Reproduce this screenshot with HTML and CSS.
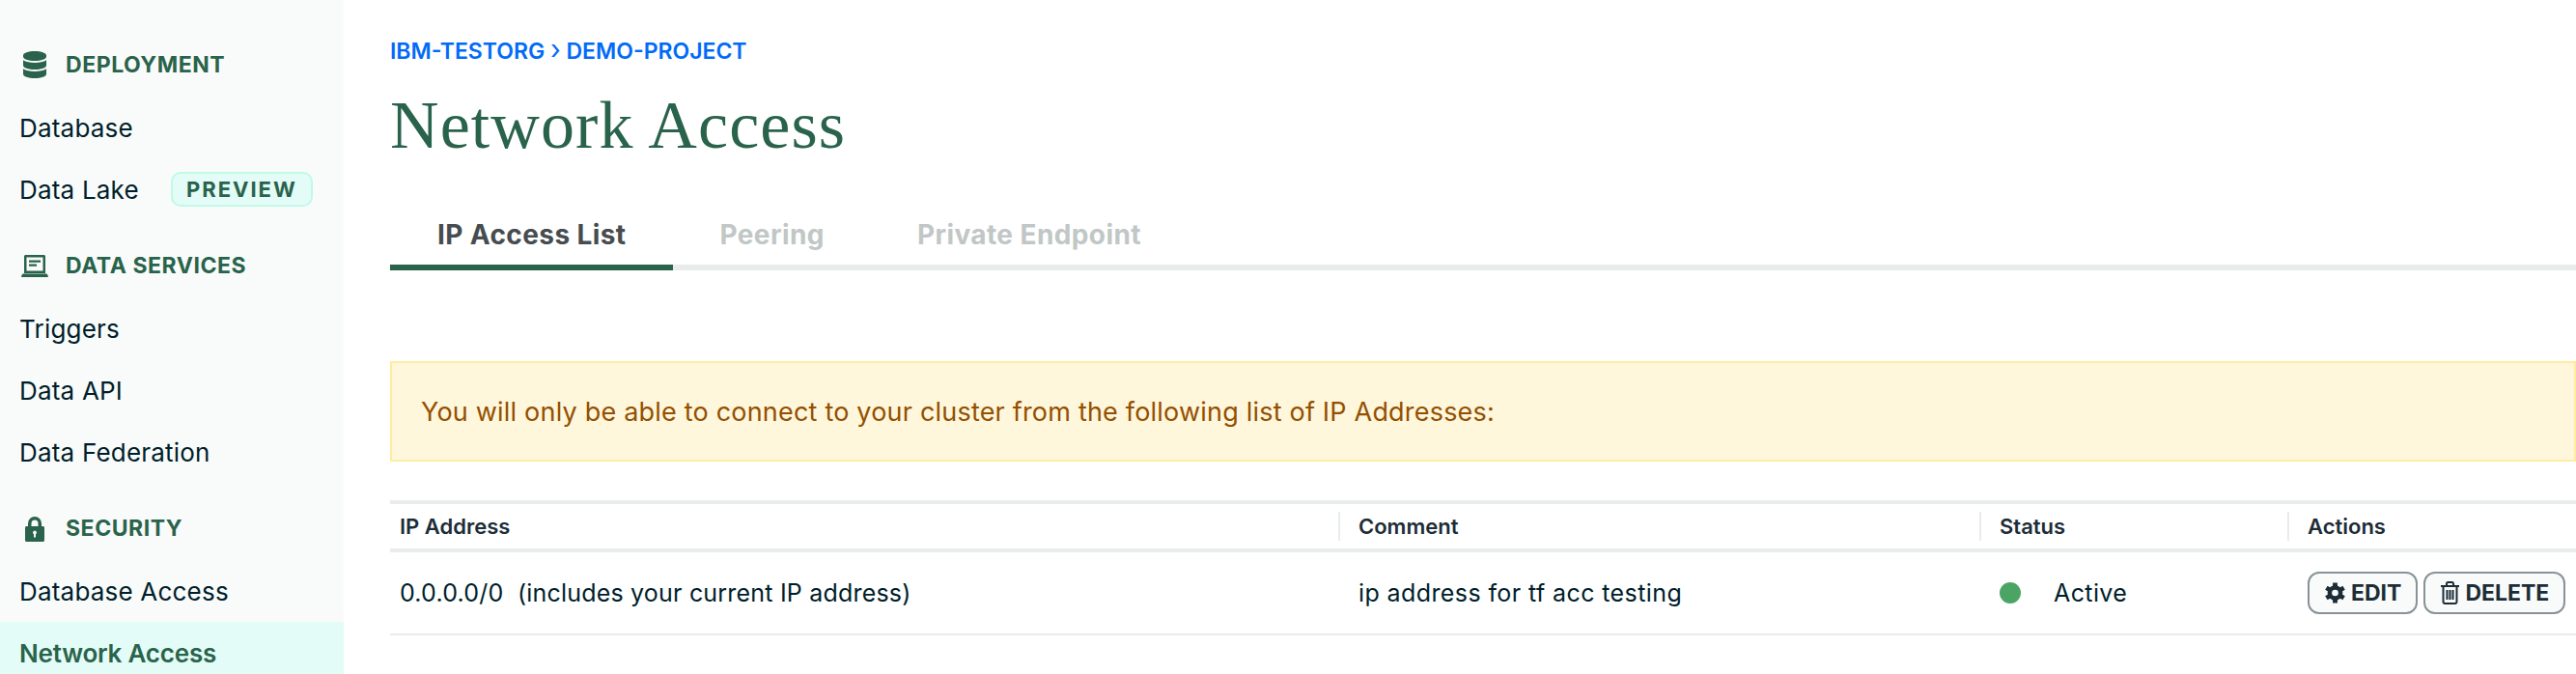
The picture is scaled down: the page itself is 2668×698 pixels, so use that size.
FILE: index.html
```html
<!DOCTYPE html>
<html lang="en">
<head>
    <meta charset="UTF-8">
    <title>Network Access</title>
    <link rel="stylesheet" href="styles.css">
</head>
<body>
    <div class="page">
        <nav class="sidebar">
            <div class="nav-head">
                <span class="nav-icon">
                    <svg width="24" height="28" viewBox="0 0 24 28"><path d="M12 0c6.600 0 12 1.900 12 4.300v1.400C24 8.100 18.600 10 12 10S0 8.100 0 5.700V4.300C0 1.900 5.400 0 12 0zM0 9.300C2.600 11.200 7.200 12 12 12s9.400-.8 12-2.700v5.400c0 2.400-5.400 4.300-12 4.300S0 17.100 0 14.700zM0 18.300C2.600 20.200 7.200 21 12 21s9.400-.8 12-2.700v5.400c0 2.400-5.400 4.300-12 4.300S0 26.100 0 23.700z"/></svg>
                </span>
                DEPLOYMENT
            </div>
            <a class="nav-item">Database</a>
            <a class="nav-item">Data Lake <span class="badge">PREVIEW</span></a>
            <div class="nav-head">
                <span class="nav-icon">
                    <svg width="28" height="23" viewBox="0 0 28 23"><path fill-rule="evenodd" d="M3 1.500C3 .7 3.700 0 4.500 0h19c.8 0 1.500.7 1.500 1.500V19H3zM5.500 2.500V16.500h17V2.500zM8 5.500h12v2.200H8zM8 9.500h8v2.200H8zM1.500 19.500h25L28 22c0 .6-.4 1-1 1H1c-.6 0-1-.4-1-1z"/></svg>
                </span>
                DATA SERVICES
            </div>
            <a class="nav-item">Triggers</a>
            <a class="nav-item">Data API</a>
            <a class="nav-item">Data Federation</a>
            <div class="nav-head">
                <span class="nav-icon">
                    <svg width="20" height="28" viewBox="0 0 20 28"><path fill-rule="evenodd" d="M3 12V9a7 7 0 0 1 14 0v3h1.500c.8 0 1.500.7 1.500 1.500V26.500c0 .8-.7 1.500-1.500 1.500H1.500C.7 28 0 27.300 0 26.500V13.500C0 12.700.7 12 1.500 12zM6.500 12h7V9a3.500 3.500 0 0 0-7 0zM10 16.500a2 2 0 0 0-1 3.700V23.500h2v-3.300a2 2 0 0 0-1-3.700z"/></svg>
                </span>
                SECURITY
            </div>
            <a class="nav-item">Database Access</a>
            <a class="nav-item selected">Network Access</a>
        </nav>

        <main class="content">
            <div class="crumbs">IBM-TESTORG <span class="crumb-sep">&rsaquo;</span> DEMO-PROJECT</div>
            <h1>Network Access</h1>

            <div class="tabs">
                <a class="tab active">IP Access List</a>
                <a class="tab">Peering</a>
                <a class="tab">Private Endpoint</a>
            </div>

            <div class="notice">You will only be able to connect to your cluster from the following list of IP Addresses:</div>

            <div class="ip-table">
                <div class="row head-row">
                    <div class="cell first"><span class="th">IP Address</span></div>
                    <div class="cell"><span class="th">Comment</span></div>
                    <div class="cell"><span class="th">Status</span></div>
                    <div class="cell"><span class="th">Actions</span></div>
                </div>
                <div class="row body-row">
                    <div class="cell first">0.0.0.0/0 &nbsp;(includes your current IP address)</div>
                    <div class="cell pad">ip address for tf acc testing</div>
                    <div class="cell pad status"><span class="dot"></span>Active</div>
                    <div class="cell pad actions">
                        <button class="btn">
                            <svg width="21" height="22" viewBox="0 0 24 24"><g stroke="#1c2d38" stroke-width="5.500"><path d="M12 0v24M1.600 6l20.800 12M1.600 18L22.400 6"/></g><circle cx="12" cy="12" r="9" fill="#1c2d38"/><circle cx="12" cy="12" r="3.800" fill="#f9fbfa"/></svg>
                            EDIT
                        </button>
                        <button class="btn">
                            <svg width="19" height="24" viewBox="0 0 19 24"><path fill="none" stroke="#1c2d38" stroke-width="2" d="M0 5h19M6 5V2.500C6 1.700 6.700 1 7.500 1h4c.8 0 1.500.7 1.500 1.500V5M2.500 5v16c0 1.100.9 2 2 2h10c1.100 0 2-.9 2-2V5M6.500 9v10M9.500 9v10M12.500 9v10"/></svg>
                            DELETE
                        </button>
                    </div>
                </div>
            </div>
        </main>
    </div>
</body>
</html>
```

FILE: styles.css
```css
html, body {
    height: 698px;
    overflow: hidden;
}

body {
    margin: 0;
    font-family: "Inter", "Noto Sans", sans-serif;
    color: #001e2b;
    background-color: #fff;
}

.page {
    display: flex;
    height: 698px;
    overflow: hidden;
}

/* left nav */
.sidebar {
    width: 356px;
    flex-shrink: 0;
    padding-top: 20px;
    background-color: #f9fbfa;
}

.nav-head {
    display: flex;
    align-items: center;
    gap: 18px;
    height: 40px;
    padding: 27px 0 13px 22px;
    font-size: 23px;
    font-weight: 700;
    letter-spacing: 0.55px;
    color: #2a634b;
}

.nav-icon {
    display: flex;
    justify-content: center;
    width: 28px;
}

.nav-icon svg {
    fill: #2a634b;
}

.nav-item {
    display: flex;
    align-items: center;
    gap: 33px;
    height: 64px;
    padding-left: 20px;
    font-size: 26px;
    letter-spacing: 0.2px;
}

.nav-item.selected {
    font-weight: 600;
    letter-spacing: -0.2px;
    color: #2a634b;
    background-color: #e3fcf7;
}

.badge {
    display: flex;
    align-items: center;
    justify-content: center;
    box-sizing: border-box;
    width: 147px;
    height: 36px;
    font-size: 22px;
    font-weight: 700;
    letter-spacing: 2px;
    color: #2a634b;
    background-color: #e3fcf7;
    border: 2px solid #c0fae6;
    border-radius: 10px;
}

/* main area */
.content {
    flex: 1;
    padding-left: 48px;
}

.crumbs {
    height: 30px;
    margin-top: 38px;
    line-height: 30px;
    font-size: 23px;
    font-weight: 600;
    color: #016bf8;
}

.crumb-sep {
    font-weight: 400;
    font-size: 28px;
    line-height: 20px;
}

h1 {
    margin: 14px 0 0;
    height: 96px;
    line-height: 96px;
    font-family: "Liberation Serif", serif;
    font-size: 70px;
    font-weight: 400;
    letter-spacing: 1.1px;
    color: #2a634b;
}

.tabs {
    display: flex;
    margin-top: 26px;
    border-bottom: 6px solid #e8edeb;
}

.tab {
    height: 67px;
    margin-bottom: -6px;
    padding: 3px 48px 0;
    line-height: 72px;
    font-size: 28px;
    font-weight: 700;
    letter-spacing: 0.4px;
    color: #c1c7c6;
}

.tab.active {
    padding: 3px 49px 0;
    color: #464c4f;
    border-bottom: 6px solid #2a634b;
}

.notice {
    display: flex;
    align-items: center;
    box-sizing: border-box;
    height: 104px;
    margin-top: 94px;
    padding-left: 30px;
    font-size: 27px;
    letter-spacing: 0.2px;
    color: #944f01;
    background-color: #fef7db;
    border: 2px solid #ffec9e;
}

/* table */
.ip-table {
    margin-top: 40px;
    border-top: 4px solid #e8edeb;
}

.row {
    display: grid;
    grid-template-columns: 982px 664px 319px 1fr;
    align-items: center;
}

.head-row {
    height: 46px;
    border-bottom: 4px solid #e8edeb;
    font-size: 22px;
    font-weight: 600;
    color: #1c2d38;
}

.body-row {
    height: 84px;
    border-bottom: 2px solid #e8edeb;
    font-size: 25px;
    letter-spacing: 0.2px;
}

.th {
    display: block;
    height: 30px;
    line-height: 30px;
    padding-left: 19px;
    border-left: 2px solid #e8edeb;
}

.first {
    padding-left: 10px;
}

.first .th {
    padding-left: 0;
    border-left: none;
}

.pad {
    padding-left: 21px;
    letter-spacing: 0.4px;
}

.status {
    display: flex;
    align-items: center;
    gap: 34px;
}

.dot {
    width: 22px;
    height: 22px;
    border-radius: 50%;
    background-color: #4aa564;
}

.actions {
    display: flex;
    gap: 6px;
}

.btn {
    display: flex;
    align-items: center;
    gap: 6px;
    height: 44px;
    padding: 0 15px 0 16px;
    font-family: inherit;
    font-size: 23px;
    font-weight: 700;
    color: #1c2d38;
    background-color: #f9fbfa;
    border: 2px solid #889397;
    border-radius: 12px;
}
```
